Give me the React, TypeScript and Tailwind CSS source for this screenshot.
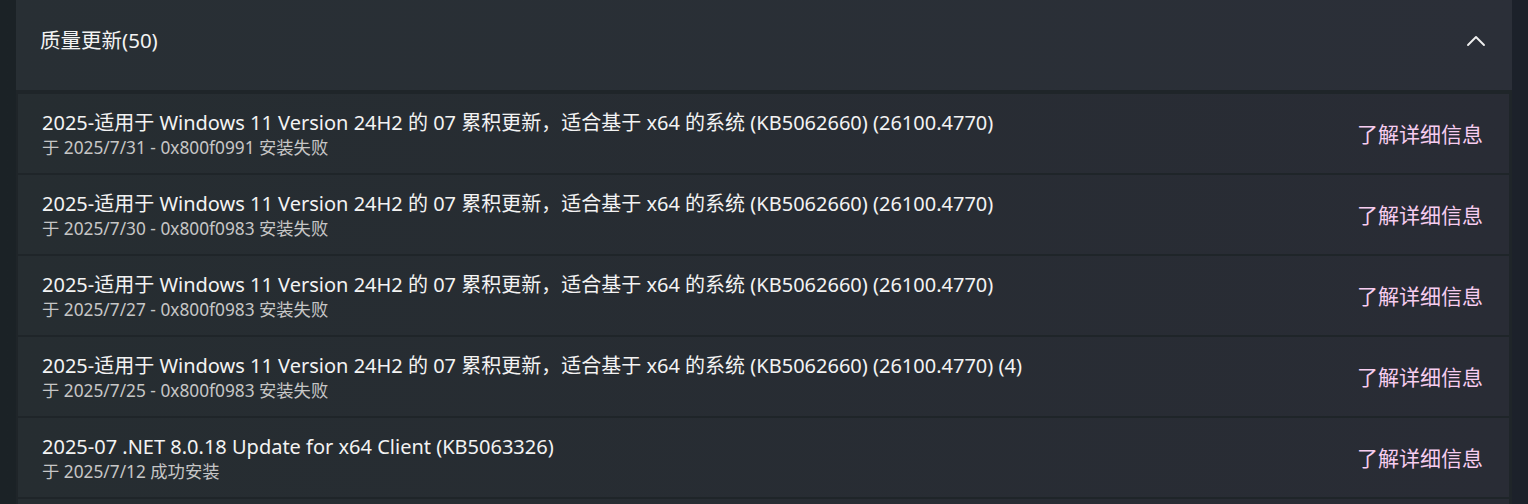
import { ChevronUp } from "lucide-react";

type Update = {
  title: string;
  detail: string;
};

const updates: Update[] = [
  {
    title: "2025-适用于 Windows 11 Version 24H2 的 07 累积更新，适合基于 x64 的系统 (KB5062660) (26100.4770)",
    detail: "于 2025/7/31 - 0x800f0991 安装失败",
  },
  {
    title: "2025-适用于 Windows 11 Version 24H2 的 07 累积更新，适合基于 x64 的系统 (KB5062660) (26100.4770)",
    detail: "于 2025/7/30 - 0x800f0983 安装失败",
  },
  {
    title: "2025-适用于 Windows 11 Version 24H2 的 07 累积更新，适合基于 x64 的系统 (KB5062660) (26100.4770)",
    detail: "于 2025/7/27 - 0x800f0983 安装失败",
  },
  {
    title: "2025-适用于 Windows 11 Version 24H2 的 07 累积更新，适合基于 x64 的系统 (KB5062660) (26100.4770) (4)",
    detail: "于 2025/7/25 - 0x800f0983 安装失败",
  },
  {
    title: "2025-07 .NET 8.0.18 Update for x64 Client (KB5063326)",
    detail: "于 2025/7/12 成功安装",
  },
];

function UpdateRow({ update }: { update: Update }) {
  return (
    <div className="flex h-[79px] shrink-0 items-center justify-between bg-gradient-to-r from-[#262d31] to-[#292c35] pl-6 pr-[26px]">
      <div className="flex flex-col pt-[1px]">
        <span className="text-[20px] leading-[24px] text-[#f3f3f3]">{update.title}</span>
        <span className="mt-[2px] text-[17.3px] leading-[21px] text-[#c6c6c6]">{update.detail}</span>
      </div>
      <button type="button" className="pt-[2px] text-[21px] text-[#f7cdf0]">
        了解详细信息
      </button>
    </div>
  );
}

export default function App() {
  return (
    <div
      className="h-[504px] w-[1528px] overflow-hidden bg-gradient-to-r from-[#1b2226] to-[#1c212a] px-4"
      style={{ fontFamily: '"Noto Sans", "Noto Sans CJK SC", sans-serif' }}
    >
      <div className="flex h-[90px] items-center justify-between bg-gradient-to-r from-[#282f34] to-[#2b2f38] pl-6 pr-5">
        <span className="pb-[9px] text-[20.5px] text-[#f3f3f3]">质量更新(50)</span>
        <ChevronUp className="mb-[9px] h-8 w-8 text-[#f0f0f0]" strokeWidth={1.4} />
      </div>
      <div className="flex flex-col gap-[2px] bg-[#1f2529] pl-[2px] pr-[3px] pt-1">
        {updates.map((u, i) => (
          <UpdateRow key={i} update={u} />
        ))}
        {/* next row, only its top edge is visible */}
        <div className="h-[79px] shrink-0 bg-gradient-to-r from-[#262d31] to-[#292c35]" />
      </div>
    </div>
  );
}
